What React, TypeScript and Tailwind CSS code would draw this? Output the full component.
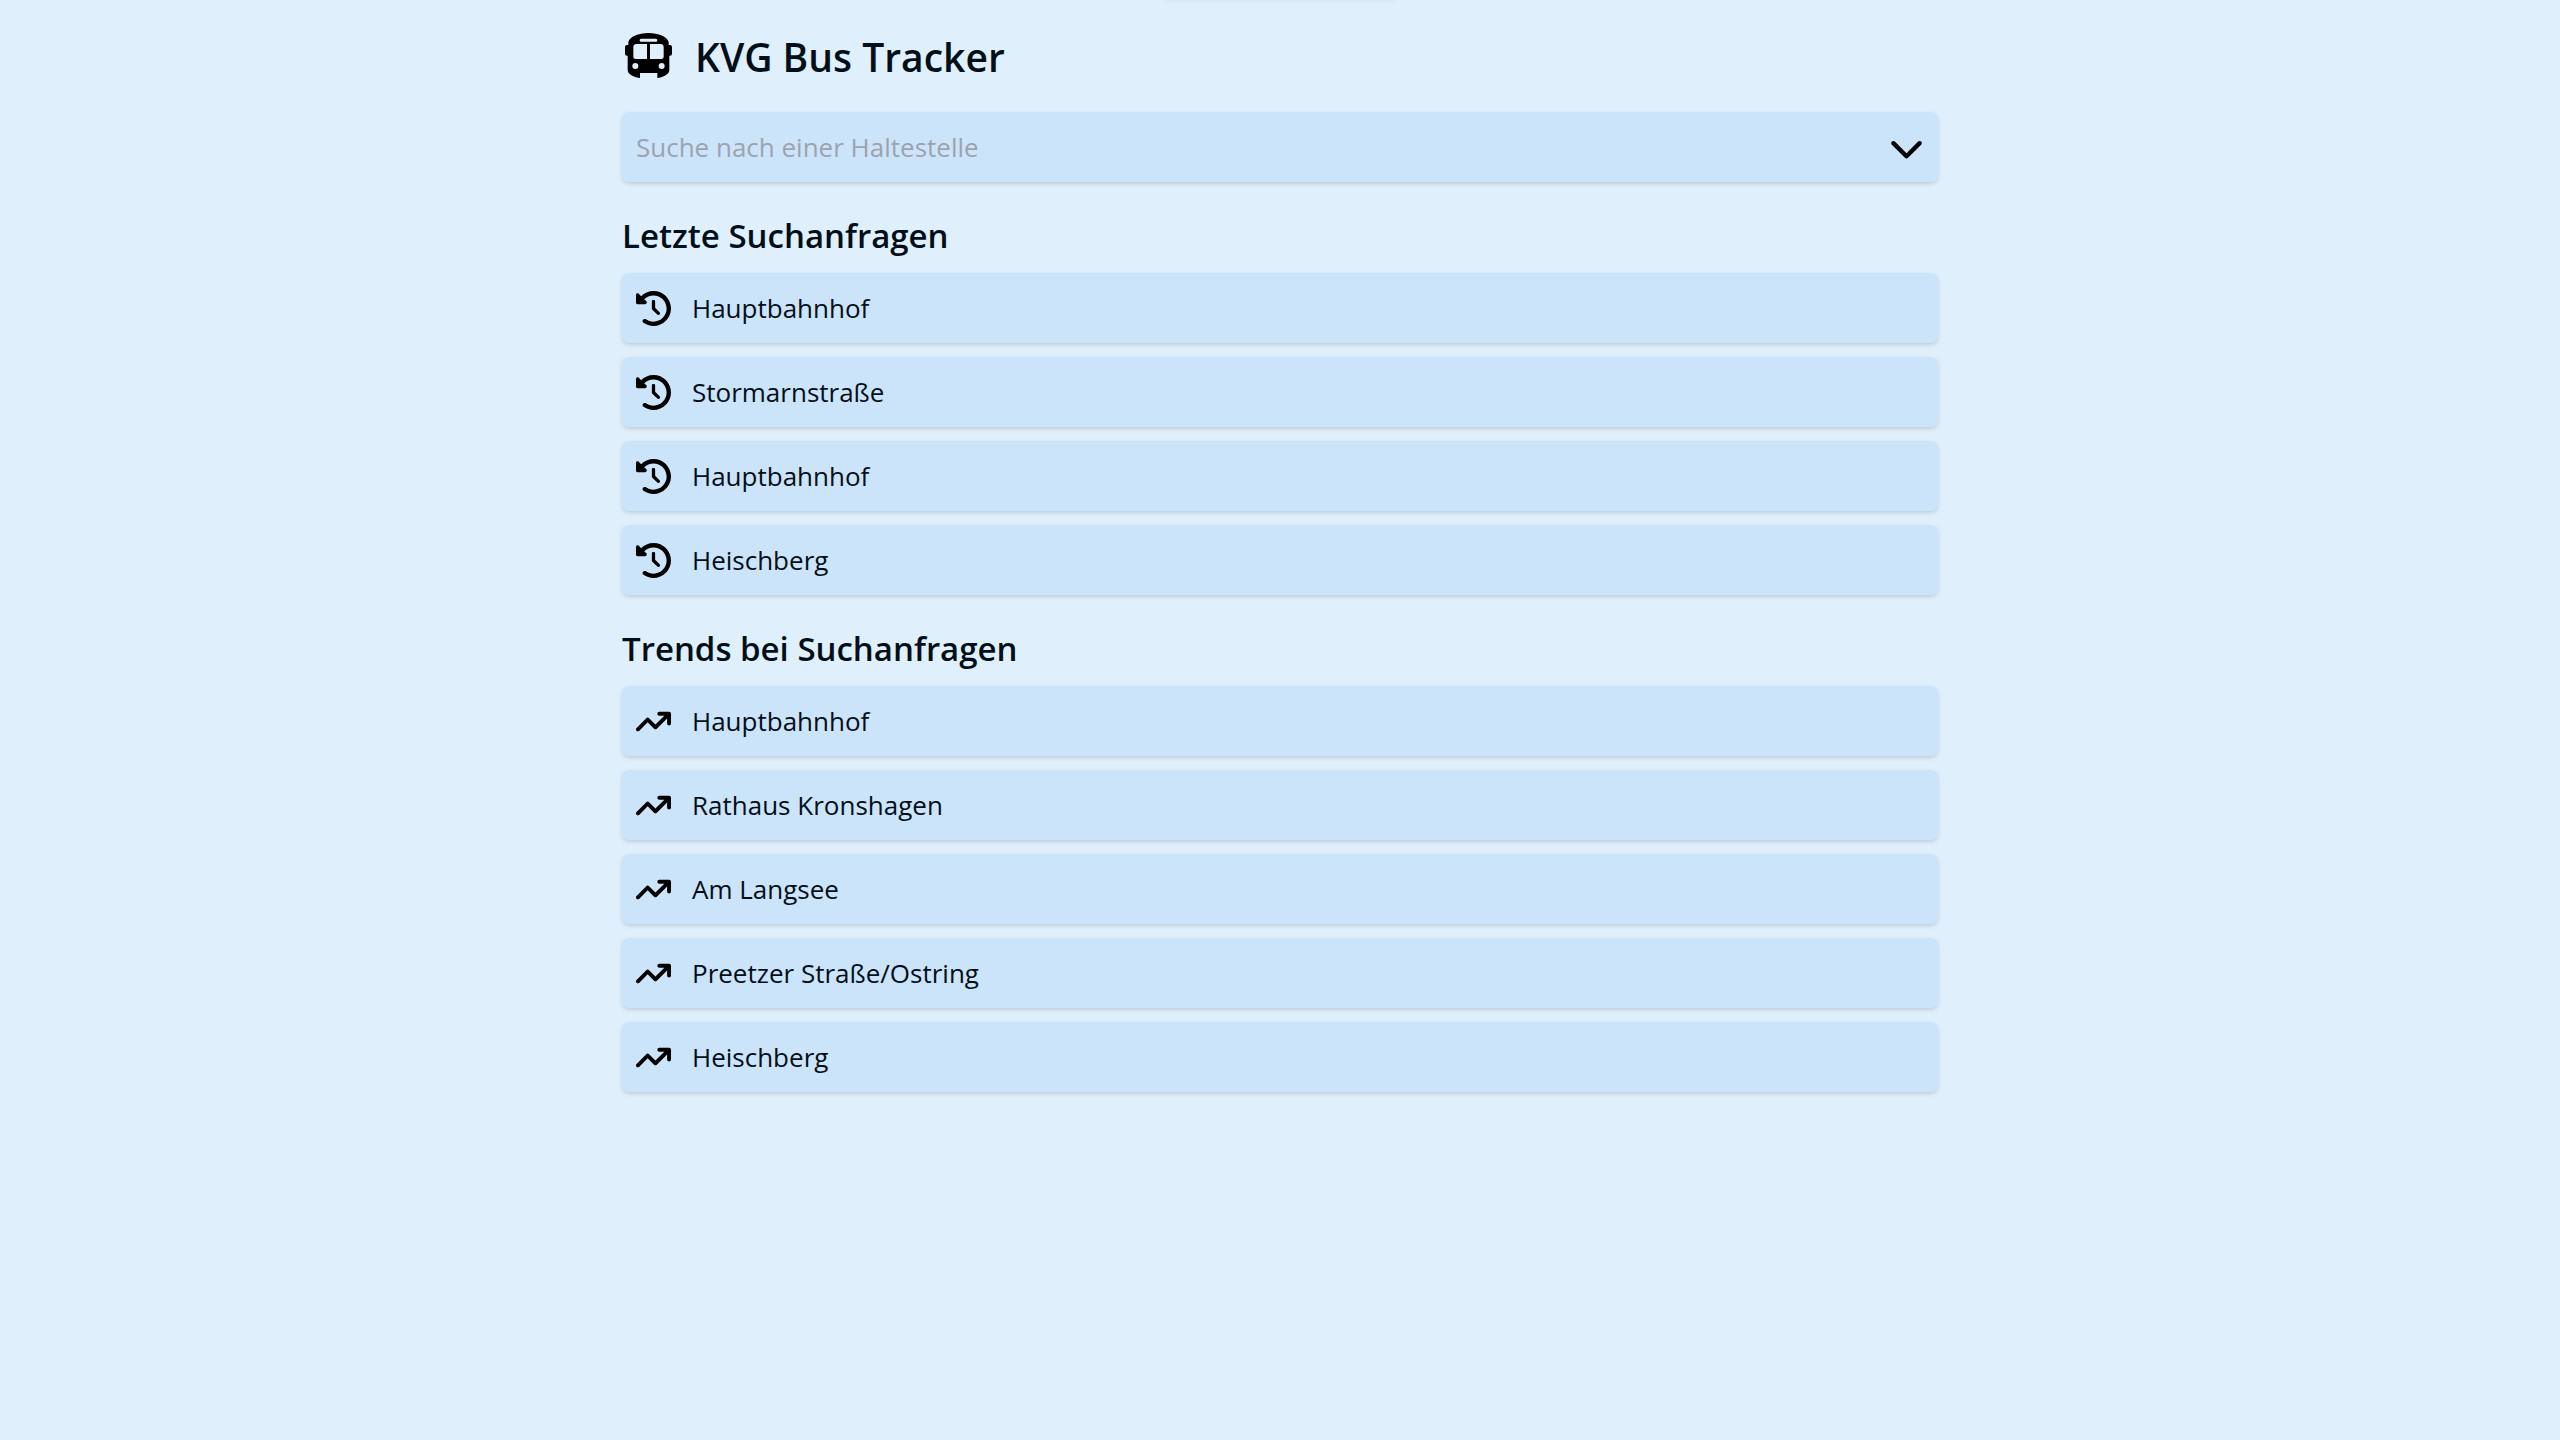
import React from "react";
import { FaArrowTrendUp, FaChevronDown, FaClockRotateLeft } from "react-icons/fa6";
import type { IconType } from "react-icons";

const recentSearches = ["Hauptbahnhof", "Stormarnstraße", "Hauptbahnhof", "Heischberg"];
const trendingSearches = [
  "Hauptbahnhof",
  "Rathaus Kronshagen",
  "Am Langsee",
  "Preetzer Straße/Ostring",
  "Heischberg",
];

function BusLogo() {
  return (
    <svg viewBox="36 33 156 150" className="h-[50px] w-[52px] shrink-0" aria-hidden="true">
      <path
        fillRule="evenodd"
        d="M115.5 39 C85 39 60 50 55 66 V75 H51 Q45 75 45 81 V101 Q45 107 51 107 H53 V150 Q53 157 58 161 Q69 171 90 174 V159 H142 V174 Q162 171 173 161 Q178 157 178 150 V107 H180 Q186 107 186 101 V81 Q186 75 180 75 H176 V66 C171 50 146 39 115.5 39 Z
           M93 56 H138 Q142 56 142 60.5 Q142 65 138 65 H93 Q89 65 89 60.5 Q89 56 93 56 Z
           M80 72 H111 V117 H77 Q70 117 70 110 V82 Q70 72 80 72 Z
           M120 72 H151 Q161 72 161 82 V110 Q161 117 154 117 H120 Z
           M67 138 a9 9 0 1 0 18 0 a9 9 0 1 0 -18 0 Z
           M146 138 a9 9 0 1 0 18 0 a9 9 0 1 0 -18 0 Z"
      />
    </svg>
  );
}

function StopList({ title, stops, icon: Icon }: { title: string; stops: string[]; icon: IconType }) {
  return (
    <section className="mt-7">
      <h2 className="text-[33px] leading-[51px] font-semibold">{title}</h2>
      <ul className="mt-3 flex flex-col gap-3.5">
        {stops.map((stop, index) => (
          <li key={index}>
            <button
              type="button"
              className="flex h-[70px] w-full items-center gap-[21px] rounded-[7px] bg-[#cce4fa] px-3.5 text-left shadow-[0_2px_5px_rgba(0,0,0,0.1),0_2px_4px_-2px_rgba(0,0,0,0.1)]"
            >
              <Icon className="size-[35px] shrink-0 text-black" aria-hidden="true" />
              <span>{stop}</span>
            </button>
          </li>
        ))}
      </ul>
    </section>
  );
}

export default function App() {
  return (
    <div className="relative min-h-screen overflow-hidden bg-[#dfeffc] font-['Open_Sans','Noto_Sans',sans-serif] text-[26px] leading-[42px] text-[#020f18]">
      <div className="absolute -top-5 left-1/2 h-5 w-[230px] -translate-x-1/2 shadow-[0_0_7px_rgba(0,0,40,0.06)]" />
      <main className="mx-auto w-full max-w-[1344px] px-3.5 pb-7">
        <header className="flex h-28 items-center gap-[21px]">
          <BusLogo />
          <h1 className="pt-0.5 text-[39px] leading-[56px] font-semibold">KVG Bus Tracker</h1>
        </header>
        <form
          role="search"
          onSubmit={(event) => event.preventDefault()}
          className="flex h-[70px] items-center gap-3.5 rounded-[7px] bg-[#cce4fa] px-3.5 shadow-[0_2px_5px_rgba(0,0,0,0.1),0_2px_4px_-2px_rgba(0,0,0,0.1)]"
        >
          <input
            type="text"
            aria-label="Suche nach einer Haltestelle"
            placeholder="Suche nach einer Haltestelle"
            className="min-w-0 flex-1 bg-transparent outline-none placeholder:text-[#9ca3af]"
          />
          <button type="button" aria-label="Haltestellen anzeigen" className="text-black">
            <FaChevronDown className="size-[35px]" aria-hidden="true" />
          </button>
        </form>
        <StopList title="Letzte Suchanfragen" stops={recentSearches} icon={FaClockRotateLeft} />
        <StopList title="Trends bei Suchanfragen" stops={trendingSearches} icon={FaArrowTrendUp} />
      </main>
    </div>
  );
}
